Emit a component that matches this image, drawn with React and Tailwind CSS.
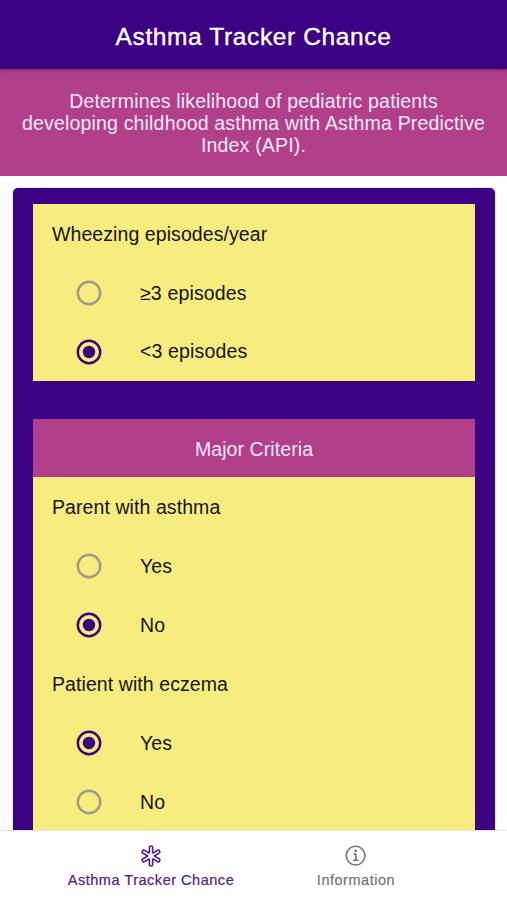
import React, { useState } from "react";
import { IoMedicalOutline, IoInformationCircleOutline } from "react-icons/io5";

const majorCriteria = [
  { id: "parentAsthma", label: "Parent with asthma" },
  { id: "eczema", label: "Patient with eczema" },
];

const yesNo = [
  { value: "yes", label: "Yes" },
  { value: "no", label: "No" },
];

const wheezingOptions = [
  { value: "gte3", label: "≥3 episodes" },
  { value: "lt3", label: "<3 episodes" },
];

const RadioRow = ({ name, label, checked, onSelect }) => (
  <label className="flex h-[58.8px] cursor-pointer items-center pl-[43px]">
    <input
      type="radio"
      name={name}
      checked={checked}
      onChange={onSelect}
      className="sr-only"
    />
    <svg
      viewBox="0 0 26 26"
      className={`h-[26px] w-[26px] shrink-0 ${
        checked ? "text-[#3b0080]" : "text-[#9c9a8e]"
      }`}
    >
      <circle
        cx="13"
        cy="13"
        r="11.2"
        fill="none"
        stroke="currentColor"
        strokeWidth="2.4"
      />
      {checked && <circle cx="13" cy="13" r="6.2" fill="currentColor" />}
    </svg>
    <span className="ml-[38px] pt-px tracking-[0.15px]">{label}</span>
  </label>
);

const Question = ({ name, label, options, value, onChange }) => (
  <div>
    <div className="flex h-[59.4px] items-center pt-0.5 pl-[19px]">{label}</div>
    {options.map((option) => (
      <RadioRow
        key={option.value}
        name={name}
        label={option.label}
        checked={value === option.value}
        onSelect={() => onChange(option.value)}
      />
    ))}
  </div>
);

const TabButton = ({ icon: Icon, label, active, onClick }) => (
  <button
    type="button"
    onClick={onClick}
    className={`flex w-[205px] flex-col items-center pt-3 ${
      active ? "text-[#4f2096]" : "text-[#737373]"
    }`}
  >
    <Icon className="h-[26px] w-[26px]" />
    <span className="mt-0.5 text-[14.5px] leading-[18px] tracking-[0.52px] whitespace-nowrap [-webkit-text-stroke:0.2px_currentColor]">
      {label}
    </span>
  </button>
);

export default function App() {
  const [tab, setTab] = useState("tracker");
  const [answers, setAnswers] = useState({
    wheezing: "lt3",
    parentAsthma: "no",
    eczema: "yes",
  });

  const setAnswer = (id, value) => setAnswers({ ...answers, [id]: value });

  return (
    <div className="flex h-[900px] w-full flex-col overflow-hidden bg-white font-['Liberation_Sans',Arial,sans-serif] text-[19.5px] tracking-[0.08px] text-[#16130a]">
      {/* Header */}
      <header className="z-10 flex h-[69px] shrink-0 items-center justify-center bg-[#3c0084] pt-1 shadow-[0_1px_3px_rgba(40,0,80,0.5)]">
        <h1 className="text-[24.5px] leading-8 tracking-[0.62px] text-white [-webkit-text-stroke:0.4px_white]">
          Asthma Tracker Chance
        </h1>
      </header>

      <main className="min-h-0 flex-1 overflow-hidden">
        <p className="h-[106.5px] bg-[#b23f8a] pt-[21px] text-center leading-[22px] tracking-[0.18px] text-[#ffe9fa]">
          Determines likelihood of pediatric patients
          <br />
          developing childhood asthma with Asthma Predictive
          <br />
          Index (API).
        </p>

        <div className="mr-[12.5px] ml-[13px] mt-[12.5px] rounded-[5px] bg-[#3c0084] py-4 pr-[19.5px] pl-5 shadow-[0_0_2px_rgba(60,0,132,0.4)]">
          <section className="bg-[#f7ed7f]">
            <Question
              name="wheezing"
              label="Wheezing episodes/year"
              options={wheezingOptions}
              value={answers.wheezing}
              onChange={(value) => setAnswer("wheezing", value)}
            />
          </section>

          <section className="mt-[38px] bg-[#f7ed7f]">
            <h2 className="flex h-[58.4px] items-center justify-center bg-[#b23f8a] pt-0.5 text-[#ffe9fa]">
              Major Criteria
            </h2>
            {majorCriteria.map((item) => (
              <Question
                key={item.id}
                name={item.id}
                label={item.label}
                options={yesNo}
                value={answers[item.id]}
                onChange={(value) => setAnswer(item.id, value)}
              />
            ))}
          </section>
        </div>
      </main>

      {/* Bottom tabs */}
      <nav className="flex h-[70px] shrink-0 justify-center border-t border-[#e4e4e4] bg-white">
        <TabButton
          icon={IoMedicalOutline}
          label="Asthma Tracker Chance"
          active={tab === "tracker"}
          onClick={() => setTab("tracker")}
        />
        <TabButton
          icon={IoInformationCircleOutline}
          label="Information"
          active={tab === "info"}
          onClick={() => setTab("info")}
        />
      </nav>
    </div>
  );
}
